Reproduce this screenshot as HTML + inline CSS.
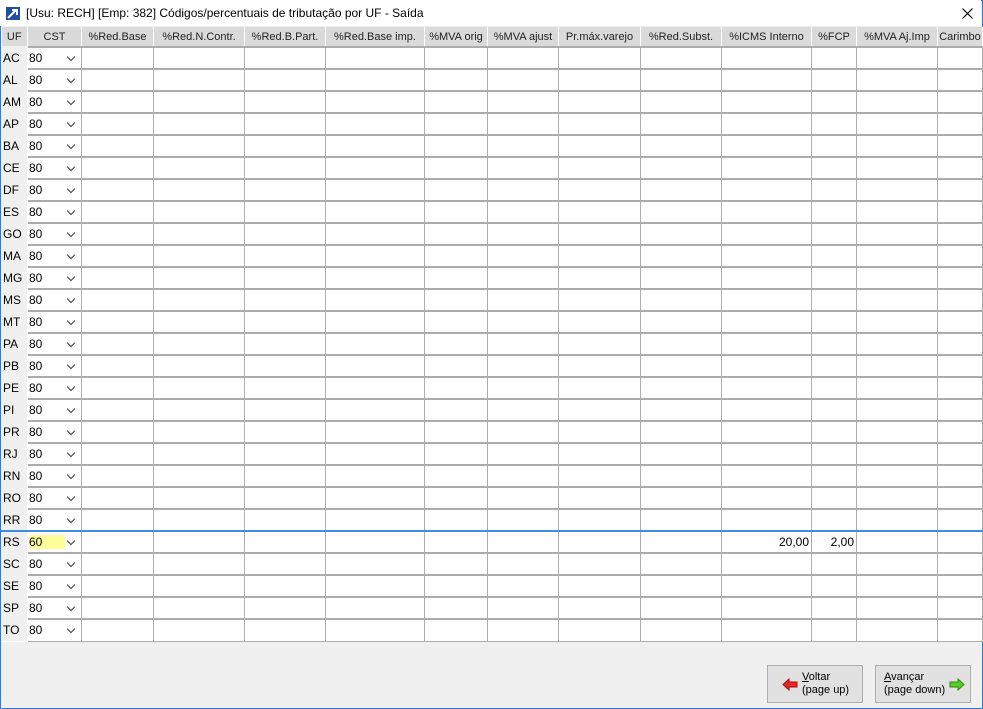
<!DOCTYPE html>
<html><head><meta charset="utf-8"><style>
*{margin:0;padding:0;box-sizing:border-box}
body{width:983px;height:709px;background:#f0f0f0;font-family:"Liberation Sans",Tahoma,sans-serif;font-size:11px;color:#000;position:relative;overflow:hidden}
.win{position:absolute;left:0;top:0;width:983px;height:709px;border:1px solid #2c7bd6}
.title{position:absolute;left:0;top:0;width:981px;height:26px;background:#fff;font-size:12px}
.title span{position:absolute;left:26px;top:6px}
table{position:absolute;left:1px;top:27px;border-collapse:collapse;table-layout:fixed;background:#fff}
th{height:20px;background:#dadada;font-weight:normal;border-right:1px solid #fff;font-size:11px;color:#222;white-space:nowrap;overflow:hidden}
td{height:22px;border:1px solid #acacac;border-top:2px solid #acacac;padding:0 2px;text-align:right;font-size:12px}
td.u{background:#f0f0f0;text-align:left;border-color:#f0f0f0 #fff #fff #f0f0f0;padding-left:1px}
td.c{text-align:left;position:relative;padding-left:1px}
td.c:after{content:"";position:absolute;right:7px;top:6px;width:5px;height:5px;border-right:1px solid #444;border-bottom:1px solid #444;transform:rotate(45deg)}
tr.s td{border-top:2px solid #3c8ee0;border-bottom:1px solid #3c8ee0}
.y{background:#ffff99;display:inline-block;width:36px}
.b{position:absolute;top:665px;width:96px;height:38px;border:1px solid #adadad;background:#e1e1e1;font-size:11px;line-height:13px}
</style></head><body>
<div class="win"></div>
<div class="title"><svg style="position:absolute;left:6px;top:7px" width="14" height="13"><rect width="14" height="13" fill="#1f4fa0"/><path d="M2 11 L10 3 M6 3 H11 V8" stroke="#fff" stroke-width="2" fill="none"/></svg><span>[Usu: RECH] [Emp: 382] Códigos/percentuais de tributação por UF - Saída</span><svg style="position:absolute;left:962px;top:8px" width="11" height="11"><path d="M0.5 0.5 L10.5 10.5 M10.5 0.5 L0.5 10.5" stroke="#000" stroke-width="1.2"/></svg></div>
<table>
<colgroup><col style="width:26px"><col style="width:54px"><col style="width:72px"><col style="width:91px"><col style="width:81px"><col style="width:99px"><col style="width:63px"><col style="width:71px"><col style="width:82px"><col style="width:81px"><col style="width:90px"><col style="width:45px"><col style="width:81px"><col style="width:45px"></colgroup>
<tr><th>UF</th><th>CST</th><th>%Red.Base</th><th>%Red.N.Contr.</th><th>%Red.B.Part.</th><th>%Red.Base imp.</th><th>%MVA orig</th><th>%MVA ajust</th><th>Pr.máx.varejo</th><th>%Red.Subst.</th><th>%ICMS Interno</th><th>%FCP</th><th>%MVA Aj.Imp</th><th>Carimbo</th></tr>
<tr><td class="u">AC</td><td class="c">80</td><td></td><td></td><td></td><td></td><td></td><td></td><td></td><td></td><td></td><td></td><td></td><td></td></tr>
<tr><td class="u">AL</td><td class="c">80</td><td></td><td></td><td></td><td></td><td></td><td></td><td></td><td></td><td></td><td></td><td></td><td></td></tr>
<tr><td class="u">AM</td><td class="c">80</td><td></td><td></td><td></td><td></td><td></td><td></td><td></td><td></td><td></td><td></td><td></td><td></td></tr>
<tr><td class="u">AP</td><td class="c">80</td><td></td><td></td><td></td><td></td><td></td><td></td><td></td><td></td><td></td><td></td><td></td><td></td></tr>
<tr><td class="u">BA</td><td class="c">80</td><td></td><td></td><td></td><td></td><td></td><td></td><td></td><td></td><td></td><td></td><td></td><td></td></tr>
<tr><td class="u">CE</td><td class="c">80</td><td></td><td></td><td></td><td></td><td></td><td></td><td></td><td></td><td></td><td></td><td></td><td></td></tr>
<tr><td class="u">DF</td><td class="c">80</td><td></td><td></td><td></td><td></td><td></td><td></td><td></td><td></td><td></td><td></td><td></td><td></td></tr>
<tr><td class="u">ES</td><td class="c">80</td><td></td><td></td><td></td><td></td><td></td><td></td><td></td><td></td><td></td><td></td><td></td><td></td></tr>
<tr><td class="u">GO</td><td class="c">80</td><td></td><td></td><td></td><td></td><td></td><td></td><td></td><td></td><td></td><td></td><td></td><td></td></tr>
<tr><td class="u">MA</td><td class="c">80</td><td></td><td></td><td></td><td></td><td></td><td></td><td></td><td></td><td></td><td></td><td></td><td></td></tr>
<tr><td class="u">MG</td><td class="c">80</td><td></td><td></td><td></td><td></td><td></td><td></td><td></td><td></td><td></td><td></td><td></td><td></td></tr>
<tr><td class="u">MS</td><td class="c">80</td><td></td><td></td><td></td><td></td><td></td><td></td><td></td><td></td><td></td><td></td><td></td><td></td></tr>
<tr><td class="u">MT</td><td class="c">80</td><td></td><td></td><td></td><td></td><td></td><td></td><td></td><td></td><td></td><td></td><td></td><td></td></tr>
<tr><td class="u">PA</td><td class="c">80</td><td></td><td></td><td></td><td></td><td></td><td></td><td></td><td></td><td></td><td></td><td></td><td></td></tr>
<tr><td class="u">PB</td><td class="c">80</td><td></td><td></td><td></td><td></td><td></td><td></td><td></td><td></td><td></td><td></td><td></td><td></td></tr>
<tr><td class="u">PE</td><td class="c">80</td><td></td><td></td><td></td><td></td><td></td><td></td><td></td><td></td><td></td><td></td><td></td><td></td></tr>
<tr><td class="u">PI</td><td class="c">80</td><td></td><td></td><td></td><td></td><td></td><td></td><td></td><td></td><td></td><td></td><td></td><td></td></tr>
<tr><td class="u">PR</td><td class="c">80</td><td></td><td></td><td></td><td></td><td></td><td></td><td></td><td></td><td></td><td></td><td></td><td></td></tr>
<tr><td class="u">RJ</td><td class="c">80</td><td></td><td></td><td></td><td></td><td></td><td></td><td></td><td></td><td></td><td></td><td></td><td></td></tr>
<tr><td class="u">RN</td><td class="c">80</td><td></td><td></td><td></td><td></td><td></td><td></td><td></td><td></td><td></td><td></td><td></td><td></td></tr>
<tr><td class="u">RO</td><td class="c">80</td><td></td><td></td><td></td><td></td><td></td><td></td><td></td><td></td><td></td><td></td><td></td><td></td></tr>
<tr><td class="u">RR</td><td class="c">80</td><td></td><td></td><td></td><td></td><td></td><td></td><td></td><td></td><td></td><td></td><td></td><td></td></tr>
<tr class="s"><td class="u">RS</td><td class="c"><span class="y">60</span></td><td></td><td></td><td></td><td></td><td></td><td></td><td></td><td></td><td>20,00</td><td>2,00</td><td></td><td></td></tr>
<tr><td class="u">SC</td><td class="c">80</td><td></td><td></td><td></td><td></td><td></td><td></td><td></td><td></td><td></td><td></td><td></td><td></td></tr>
<tr><td class="u">SE</td><td class="c">80</td><td></td><td></td><td></td><td></td><td></td><td></td><td></td><td></td><td></td><td></td><td></td><td></td></tr>
<tr><td class="u">SP</td><td class="c">80</td><td></td><td></td><td></td><td></td><td></td><td></td><td></td><td></td><td></td><td></td><td></td><td></td></tr>
<tr><td class="u">TO</td><td class="c">80</td><td></td><td></td><td></td><td></td><td></td><td></td><td></td><td></td><td></td><td></td><td></td><td></td></tr>
</table>
<div class="b" style="left:767px"><svg style="position:absolute;left:14px;top:12px" width="16" height="13"><path d="M1 6.5 L7 1 V4 H15 V9 H7 V12 Z" fill="#e8262a" stroke="#a01010"/></svg><div style="position:absolute;left:34px;top:5px"><u>V</u>oltar<br>(page up)</div></div>
<div class="b" style="left:875px"><div style="position:absolute;left:8px;top:5px"><u>A</u>vançar<br>(page down)</div><svg style="position:absolute;left:73px;top:12px" width="16" height="13"><path d="M15 6.5 L9 1 V4 H1 V9 H9 V12 Z" fill="#5ccc2a" stroke="#2f8a10"/></svg></div>
</body></html>
